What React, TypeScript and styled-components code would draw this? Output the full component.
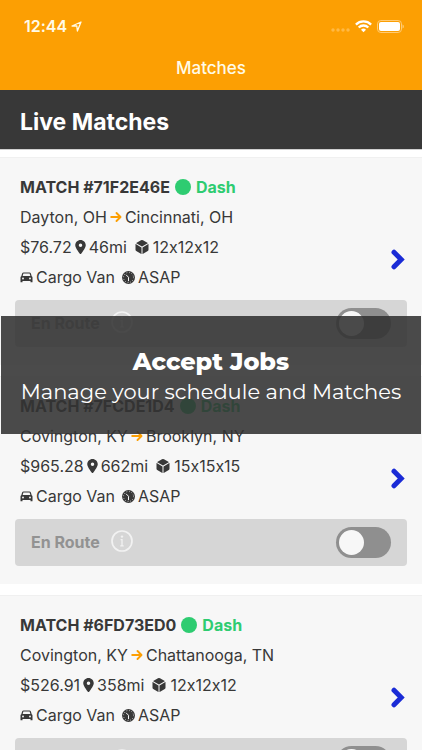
import React from "react";
import styled, { createGlobalStyle } from "styled-components";
import { FaLocationDot } from "react-icons/fa6";
import { IoCube } from "react-icons/io5";

const GlobalStyle = createGlobalStyle`
  *, *::before, *::after { box-sizing: border-box; }
  body { margin: 0; background: #fff; }
  h1, h2, h3, p, ul { margin: 0; padding: 0; font: inherit; }
`;

const Screen = styled.div`
  position: relative;
  display: flex;
  flex-direction: column;
  height: 100vh;
  overflow: hidden;
  color: #383838;
  font-family: Inter, "Liberation Sans", sans-serif;
  font-size: 16px;
  font-variant-ligatures: no-contextual;
`;

const AppBar = styled.header`
  flex: none;
  background: #fc9f03;
  color: #fffbe8;
`;

const StatusBar = styled.div`
  display: flex;
  align-items: center;
  justify-content: space-between;
  height: 46px;
  padding: 6px 18px 0 24px;
`;

const Clock = styled.div`
  display: flex;
  align-items: center;
  gap: 4px;
  font-size: 16px;
  font-weight: 600;
`;

const StatusIcons = styled.div`
  display: flex;
  align-items: flex-end;
  gap: 5px;
`;

const NavTitle = styled.h1`
  height: 44px;
  font-size: 17px;
  font-weight: 500;
  line-height: 44px;
  text-align: center;
`;

const SectionTitle = styled.h2`
  flex: none;
  height: 60px;
  padding: 0 20px;
  border-bottom: 1px solid #d0d0d0;
  background: #383838;
  color: #fff;
  font-size: 23px;
  font-weight: 700;
  line-height: 64px;
`;

const MatchList = styled.ul`
  display: flex;
  flex: 1;
  flex-direction: column;
  gap: 11px;
  min-height: 0;
  padding-top: 7px;
  overflow-y: auto;
  scrollbar-width: none;
  list-style: none;
`;

const Card = styled.li`
  flex: none;
  padding: 14px 15px 18px;
  border-top: 1px solid #f0f0f0;
  background: #f7f7f7;
`;

const CardBody = styled.div`
  display: flex;
  align-items: center;
  justify-content: space-between;
  padding: 0 2px 0 5px;
`;

const Line = styled.div<{ $strong?: boolean }>`
  display: flex;
  align-items: center;
  gap: ${(p) => (p.$strong ? 5 : 3)}px;
  height: 30px;
  font-weight: ${(p) => (p.$strong ? 700 : 400)};
  white-space: nowrap;

  svg { flex: none; }
`;

const Heading = styled.h3`
  font-weight: 700;
`;

const Detail = styled.span<{ $spaced?: boolean }>`
  display: flex;
  align-items: center;
  gap: 3px;
  margin-left: ${(p) => (p.$spaced ? 4 : 0)}px;
`;

const Pin = styled(FaLocationDot)`
  width: 11px;
  height: 14px;
`;

const Dot = styled.span`
  width: 16px;
  height: 16px;
  border-radius: 50%;
  background: #2ecc71;
`;

const Service = styled.span`
  color: #2ecc71;
`;

const OpenButton = styled.button`
  display: flex;
  margin-top: 55px;
  padding: 0;
  border: 0;
  background: none;
  color: #1a2bd6;
`;

const RouteBar = styled.div`
  display: flex;
  align-items: center;
  height: 47px;
  margin-top: 8px;
  padding: 0 16px;
  border-radius: 4px;
  background: #d6d6d6;
`;

const RouteLabel = styled.label`
  padding-bottom: 2px;
  color: #929292;
  font-weight: 700;
`;

const InfoButton = styled.button`
  display: flex;
  margin-left: 11px;
  padding: 0 0 3px;
  border: 0;
  background: none;
  color: #f2f2f2;
`;

const Toggle = styled.input`
  display: flex;
  align-items: center;
  width: 55px;
  height: 31px;
  margin: 0 0 0 auto;
  padding: 0 3px;
  border-radius: 16px;
  background: #8f8f8f;
  appearance: none;

  &::before {
    width: 25px;
    height: 25px;
    border-radius: 50%;
    background: #f7f7f7;
    content: "";
  }

  &:checked {
    justify-content: flex-end;
    background: #2ecc71;
  }
`;

const Banner = styled.aside`
  position: absolute;
  top: 316px;
  right: 1px;
  left: 1px;
  padding: 31px 0 27px;
  background: rgba(50, 50, 50, 0.88);
  color: #fff;
  font-family: Montserrat, Inter, sans-serif;
  line-height: 30px;
  text-align: center;
  white-space: nowrap;
`;

const BannerTitle = styled.h2`
  font-size: 24px;
  font-weight: 800;
`;

const BannerText = styled.p`
  font-size: 21px;
`;

const LocationArrow = () => (
  <svg width="11" height="11" viewBox="0 0 11 11" fill="none" stroke="currentColor" strokeWidth="1.3" strokeLinejoin="round" aria-hidden="true">
    <path d="M10 1 1 5h4.8L6.4 10z" />
  </svg>
);

const SignalDots = () => (
  <svg width="19" height="5" viewBox="0 0 19 5" fill="#ffb945" aria-hidden="true">
    <circle cx="2" cy="2" r="1.7" />
    <circle cx="7" cy="2" r="1.7" />
    <circle cx="12" cy="2" r="1.7" />
    <circle cx="17" cy="2" r="1.7" />
  </svg>
);

const Wifi = () => (
  <svg width="17" height="13" viewBox="0 0 17 13" fill="none" stroke="#fff" strokeWidth="2.3" aria-hidden="true">
    <path d="M.9 4.6a10.8 10.8 0 0 1 15.2 0M3.7 7.5a6.8 6.8 0 0 1 9.6 0" />
    <path d="M8.5 12.2 6 9.7a3.6 3.6 0 0 1 5 0z" fill="#fff" stroke="none" />
  </svg>
);

const Battery = () => (
  <svg width="27" height="13" viewBox="0 0 27 13" aria-hidden="true">
    <rect x=".5" y=".5" width="24" height="12" rx="3.4" fill="none" stroke="#ffcb75" />
    <rect x="2" y="2" width="21" height="9" rx="2" fill="#fff" />
    <path d="M25.6 4.6v4q1.2-.6 1.2-2t-1.2-2z" fill="#ffd48a" />
  </svg>
);

const RouteArrow = () => (
  <svg width="12" height="12" viewBox="0 0 12 12" fill="none" stroke="#fc9f03" strokeWidth="1.9" strokeLinecap="round" strokeLinejoin="round" aria-hidden="true">
    <path d="M1.200 6h9.200M6.500 2l4 4-4 4" />
  </svg>
);

const Car = () => (
  <svg width="13" height="11" viewBox="0 0 26 22" fill="currentColor" fillRule="evenodd" aria-hidden="true">
    <path d="M4.2 3.2Q5 1 7.2 1h11.6q2.2 0 3 2.2l1.6 5.2Q25 9 25 11v9.5h-4V18H5v2.5H1V11q0-2 1.6-2.6zM6.8 3 5.3 8h15.4L19.2 3zM6 11.2a1.900 1.900 0 1 0 0 3.800 1.900 1.900 0 0 0 0-3.800zm14 0a1.900 1.900 0 1 0 0 3.800 1.900 1.900 0 0 0 0-3.800z" />
  </svg>
);

const Chevron = () => (
  <svg width="14" height="21" viewBox="0 0 14 21" fill="none" stroke="currentColor" strokeWidth="5" strokeLinecap="round" aria-hidden="true">
    <path d="m3 3.200 7.200 7.300L3 17.800" />
  </svg>
);

const DialClock = () => (
  <svg width="13" height="13" viewBox="0 0 26 26" aria-hidden="true">
    <circle cx="13" cy="13" r="13" fill="currentColor" />
    <circle cx="13" cy="13" r="10" fill="none" stroke="#f7f7f7" strokeWidth="2" strokeDasharray="1.300 3.936" />
    <path d="M8.500 8 13 12.500v7" fill="none" stroke="#f7f7f7" strokeWidth="2" strokeLinecap="round" />
  </svg>
);

const InfoCircle = () => (
  <svg width="22" height="22" viewBox="0 0 22 22" fill="none" stroke="currentColor" aria-hidden="true">
    <circle cx="11" cy="11" r="10" strokeWidth="1.7" />
    <circle cx="11" cy="6.600" r="1.200" fill="currentColor" stroke="none" />
    <path d="M9.600 9.600H11v6.200M9.300 15.800h3.400" strokeWidth="1.300" />
  </svg>
);

interface Match {
  id: string;
  from: string;
  to: string;
  price: string;
  distance: string;
  size: string;
}

const matches: Match[] = [
  { id: "71F2E46E", from: "Dayton, OH", to: "Cincinnati, OH", price: "$76.72", distance: "46mi", size: "12x12x12" },
  { id: "7FCDE1D4", from: "Covington, KY", to: "Brooklyn, NY", price: "$965.28", distance: "662mi", size: "15x15x15" },
  { id: "6FD73ED0", from: "Covington, KY", to: "Chattanooga, TN", price: "$526.91", distance: "358mi", size: "12x12x12" },
];

const MatchCard = ({ match }: { match: Match }) => (
  <Card>
    <CardBody>
      <div>
        <Line $strong>
          <Heading>MATCH #{match.id}</Heading>
          <Dot />
          <Service>Dash</Service>
        </Line>
        <Line>
          {match.from}
          <RouteArrow />
          {match.to}
        </Line>
        <Line>
          {match.price}
          <Detail><Pin />{match.distance}</Detail>
          <Detail $spaced><IoCube size={16} />{match.size}</Detail>
        </Line>
        <Line>
          <Detail><Car />Cargo Van</Detail>
          <Detail $spaced><DialClock />ASAP</Detail>
        </Line>
      </div>
      <OpenButton aria-label={`Open match ${match.id}`}>
        <Chevron />
      </OpenButton>
    </CardBody>
    <RouteBar>
      <RouteLabel htmlFor={match.id}>En Route</RouteLabel>
      <InfoButton aria-label="About En Route"><InfoCircle /></InfoButton>
      <Toggle type="checkbox" id={match.id} />
    </RouteBar>
  </Card>
);

export default function App() {
  return (
    <>
      <GlobalStyle />
      <Screen>
        <AppBar>
          <StatusBar>
            <Clock>12:44<LocationArrow /></Clock>
            <StatusIcons><SignalDots /><Wifi /><Battery /></StatusIcons>
          </StatusBar>
          <NavTitle>Matches</NavTitle>
        </AppBar>
        <SectionTitle>Live Matches</SectionTitle>
        <MatchList>
          {matches.map((match) => <MatchCard key={match.id} match={match} />)}
        </MatchList>
        <Banner>
          <BannerTitle>Accept Jobs</BannerTitle>
          <BannerText>Manage your schedule and Matches</BannerText>
        </Banner>
      </Screen>
    </>
  );
}
